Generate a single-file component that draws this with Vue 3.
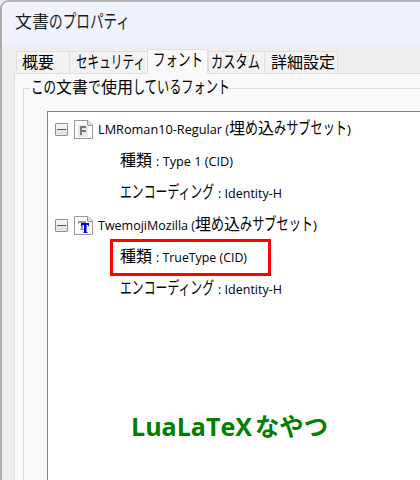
<template>
  <div class="window">
    <header class="titlebar">
      <svg class="line" width="200" height="24">
        <text v-for="r in title" :key="r.x" :x="r.x" y="17" :textLength="r.w" lengthAdjust="spacingAndGlyphs" class="title" :class="r.c">{{ r.t }}</text>
      </svg>
    </header>

    <nav class="tabs">
      <div v-for="tab in tabs" :key="tab.label" class="tab" :class="{ active: tab.active }" :style="{ width: tab.width + 'px' }">
        <svg class="line" :width="tab.width" height="20">
          <text :x="tab.x" y="15" :textLength="tab.w" lengthAdjust="spacingAndGlyphs" :class="tab.c">{{ tab.label }}</text>
        </svg>
      </div>
    </nav>

    <main class="panel">
      <section class="group">
        <div class="legend">
          <span class="rule short"></span>
          <svg class="line" width="199" height="24">
            <text v-for="r in legend" :key="r.x" :x="r.x" y="17" :textLength="r.w" lengthAdjust="spacingAndGlyphs" :class="r.c">{{ r.t }}</text>
          </svg>
          <span class="rule"></span>
        </div>

        <div class="list">
          <div v-for="font in fonts" :key="font.icon" class="font">
            <div class="row head">
              <svg class="toggle" width="13" height="13" viewBox="0 0 13 13">
                <rect x=".5" y=".5" width="12" height="12" rx=".5" fill="#f4f4f4" stroke="#919191" />
                <rect x="1" y="7" width="11" height="5" fill="#e4e4e4" />
                <rect x="2" y="6" width="9" height="1" fill="#3157a5" />
              </svg>
              <svg class="icon" width="19" height="19" viewBox="0 0 19 19">
                <path d="M.5 .5H14L18.5 5V18.5H.5Z" fill="#fbfbfb" stroke="#999" />
                <path d="M13.5 .5V5.5H18.5" fill="#ddd" stroke="#999" />
                <g v-if="font.icon === 'F'">
                  <rect x="4" y="5" width="10" height="12" fill="#e8e8e8" />
                  <path d="M6 6H12V8H8V10H12V12H8V15H6Z" fill="#777" />
                </g>
                <g v-else>
                  <path d="M4 5H12V8H11V7H9V13H10V14H6V13H7V7H5V8H4Z" fill="#999" />
                  <path d="M7 7H15V10H14V9H12.5V16H13.5V17H9.5V16H10V9H8V10H7Z" fill="#0000f5" />
                </g>
              </svg>
              <svg class="line" width="320" height="24">
                <text v-for="r in font.name" :key="r.x" :x="r.x" y="17" :textLength="r.w" lengthAdjust="spacingAndGlyphs" :class="r.c">{{ r.t }}</text>
              </svg>
            </div>
            <div v-for="(detail, i) in font.details" :key="i" class="row detail">
              <svg class="line" width="290" height="24">
                <text v-for="r in detail" :key="r.x" :x="r.x" y="17" :textLength="r.w" lengthAdjust="spacingAndGlyphs" :class="r.c">{{ r.t }}</text>
              </svg>
              <span v-if="font.marked && i === 0" class="marker"></span>
            </div>
          </div>

          <svg class="note" width="210" height="40">
            <text x="0" y="26" textLength="121" lengthAdjust="spacingAndGlyphs">LuaLaTeX</text>
            <text x="124" y="26" textLength="73" lengthAdjust="spacingAndGlyphs" class="note-ja">なやつ</text>
          </svg>
        </div>
      </section>
    </main>
  </div>
</template>

<script setup>
// Each run has its own start and advance, since kana are set narrower than kanji
const title = [
  { t: '文書', x: 0, w: 34, c: 'ja' },
  { t: 'のプロパティ', x: 34, w: 81, c: 'kana' },
]

const tabs = [
  { label: '概要', width: 53, x: 5, w: 32, c: 'ja' },
  { label: 'セキュリティ', width: 78, x: 6, w: 69, c: 'kana' },
  { label: 'フォント', width: 61, x: 5, w: 50, c: 'kana', active: true },
  { label: 'カスタム', width: 56, x: 2, w: 49, c: 'kana' },
  { label: '詳細設定', width: 74, x: 6, w: 64, c: 'ja' },
]

const legend = [
  { t: 'この', x: 1, w: 25, c: 'kana' },
  { t: '文書', x: 26, w: 32, c: 'ja' },
  { t: 'で', x: 58, w: 13, c: 'kana' },
  { t: '使用', x: 71, w: 32, c: 'ja' },
  { t: 'しているフォント', x: 103, w: 97, c: 'kana' },
]

const subset = (x) => [
  { t: '埋', x, w: 16, c: 'ja' },
  { t: 'め', x: x + 16, w: 13, c: 'kana' },
  { t: '込', x: x + 29, w: 16, c: 'ja' },
  { t: 'みサブセット', x: x + 45, w: 73, c: 'kana' },
  { t: ')', x: x + 118, w: 4, c: 'en' },
]

const kind = (value, w) => [
  { t: '種類', x: 0, w: 32, c: 'ja' },
  { t: ': ' + value, x: 36, w: w + 7, c: 'en' },
]

const encoding = [
  { t: 'エンコーディング', x: 0, w: 94, c: 'kana' },
  { t: ': Identity-H', x: 98, w: 64, c: 'en' },
]

const fonts = [
  {
    icon: 'F',
    name: [{ t: 'LMRoman10-Regular (', x: 0, w: 131, c: 'en' }, ...subset(131)],
    details: [kind('Type 1 (CID)', 70), encoding],
  },
  {
    icon: 'T',
    marked: true,
    name: [{ t: 'TwemojiMozilla (', x: 0, w: 97, c: 'en' }, ...subset(97)],
    details: [kind('TrueType (CID)', 84), encoding],
  },
]
</script>

<style>
body {
  margin: 0;
  background: #e8e8e8;
  overflow: hidden;
}
</style>

<style scoped>
.window {
  box-sizing: border-box;
  width: 420px;
  height: 480px;
  border-top: 2px solid #b5b5b5;
  border-left: 2px solid #adadad;
  border-top-left-radius: 9px;
  background: #eeeeee;
  overflow: hidden;
  display: flex;
  flex-direction: column;
}

.line {
  display: block;
  flex: none;
  overflow: visible;
}

.ja,
.kana {
  font-family: "Noto Sans CJK JP", sans-serif;
  font-size: 16px;
  fill: #000;
}

.kana {
  font-size: 17.5px;
}

.title {
  font-size: 17px;
  fill: #1c1c1c;
}

.kana.title {
  font-size: 18.5px;
}

.en {
  font: 12.5px "Open Sans", "Noto Sans", sans-serif;
  fill: #000;
}

.titlebar {
  box-sizing: border-box;
  height: 43px;
  flex: none;
  padding: 9px 0 0 13px;
  background: #eff3fc;
}

/* Tabs */
.tabs {
  display: flex;
  align-items: flex-end;
  height: 28px;
  flex: none;
  padding-left: 14px;
}

.tab {
  box-sizing: border-box;
  height: 22px;
  padding-top: 1px;
  background: #f2f2f2;
  border-top: 1px solid #dfdfdf;
  border-left: 1px solid #dfdfdf;
}

.tab:last-child {
  border-right: 1px solid #dfdfdf;
}

.tab.active {
  height: 25px;
  margin-bottom: -1px;
  background: #f9f9f9;
  border-right: 1px solid #dfdfdf;
  z-index: 1;
}

.panel {
  flex: 1;
  margin-left: 12px;
  border-top: 1px solid #dfdfdf;
  border-left: 1px solid #dfdfdf;
  background: #f9f9f9;
}

/* Group box */
.group {
  position: relative;
  height: 100%;
  margin-left: 8px;
}

.group::before {
  content: "";
  position: absolute;
  left: 0;
  top: 14px;
  bottom: 0;
  width: 1px;
  background: #dcdcdc;
}

.legend {
  display: flex;
  align-items: center;
  height: 28px;
}

.rule {
  flex: 1;
  height: 1px;
  background: #dcdcdc;
}

.rule.short {
  flex: none;
  width: 7px;
}

.list {
  box-sizing: border-box;
  height: 380px;
  margin-top: 9px;
  margin-left: 24px;
  padding-top: 1px;
  border-top: 1px solid #828290;
  border-left: 1px solid #828290;
  background: #fff;
}

.row {
  display: flex;
  align-items: center;
  height: 32px;
}

.head {
  padding-left: 7px;
}

.icon {
  margin-left: 6px;
  margin-right: 5px;
}

.detail {
  position: relative;
  padding-left: 72px;
}

.marker {
  position: absolute;
  box-sizing: border-box;
  left: 62px;
  top: -2px;
  width: 161px;
  height: 37px;
  border: 3px solid #f00;
}

.note {
  display: block;
  overflow: visible;
  margin: 105px 0 0 83px;
  font: bold 25px "Open Sans", "Noto Sans", sans-serif;
  fill: #008000;
}

.note-ja {
  font-family: "Noto Sans CJK JP", sans-serif;
}
</style>
